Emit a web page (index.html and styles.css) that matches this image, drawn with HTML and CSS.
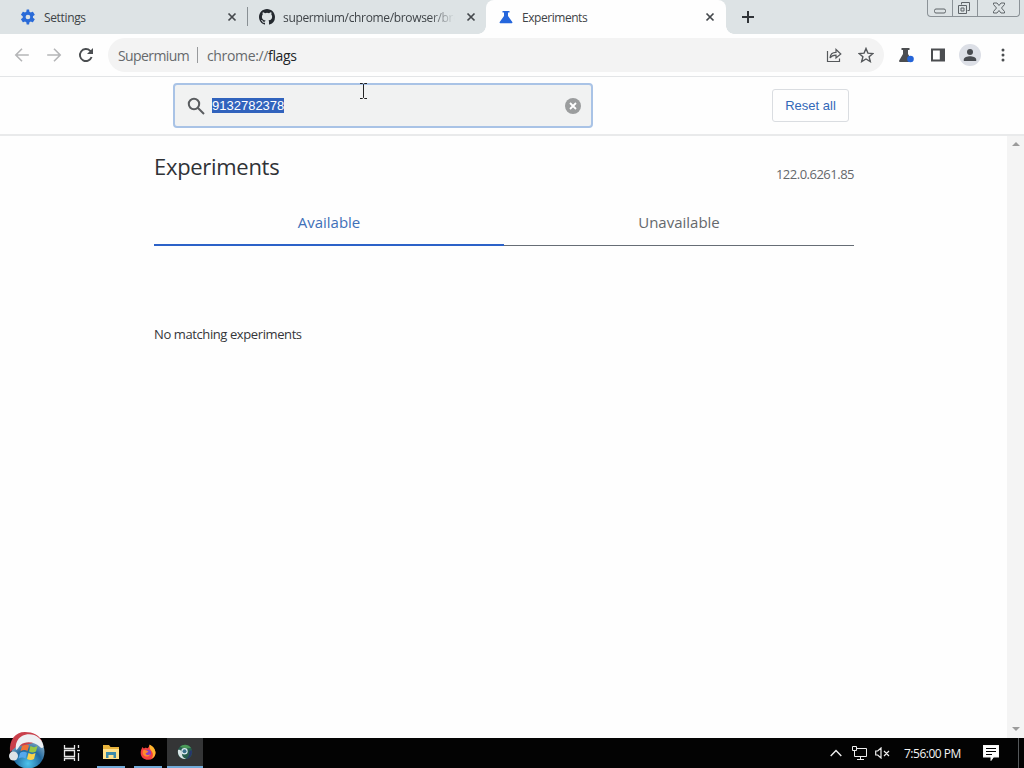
FILE: index.html
```
<!DOCTYPE html>
<html lang="en">
<head>
    <meta charset="utf-8">
    <title>Experiments</title>
    <link rel="stylesheet" href="styles.css">
</head>
<body>

<div class="desktop">
    <!-- Tab strip -->
    <div class="tab-strip">
        <div class="tab tab-settings">
            <svg class="favicon" viewBox="0 0 24 24"><path fill="#2a6bd8" d="M19.4 13c.1-.3.1-.7.1-1s0-.7-.1-1l2.500-1.900c.2-.2.300-.5.100-.7l-2.400-4c-.1-.3-.4-.4-.7-.3l-2.900 1.200c-.6-.5-1.200-.8-1.900-1.100L13.700 1.200c0-.3-.3-.5-.6-.5H10.500c-.3 0-.5.2-.6.5L9.500 4.200c-.7.3-1.300.7-1.900 1.100L4.700 4.100c-.3-.1-.6 0-.7.300l-2.400 4c-.1.200-.1.500.100.7L4.200 11c0 .3-.1.700-.1 1s0 .7.100 1l-2.500 1.900c-.2.200-.3.500-.1.7l2.400 4c.1.300.4.400.7.300l2.900-1.200c.6.500 1.200.8 1.900 1.100l.4 3c0 .3.300.5.600.5h2.600c.3 0 .5-.2.600-.5l.4-3c.7-.3 1.300-.7 1.900-1.100l2.900 1.200c.3.1.6 0 .7-.3l2.400-4c.1-.2.100-.5-.1-.7zM11.900 15.500a3.500 3.500 0 1 1 0-7 3.500 3.500 0 0 1 0 7z"/></svg>
            <span class="tab-title">Settings</span>
            <svg class="tab-close" viewBox="0 0 10 10"><path d="M1.500 1.500l7 7M8.500 1.500l-7 7"/></svg>
        </div>
        <div class="tab tab-github">
            <svg class="favicon" viewBox="0 0 16 16"><path fill="#24292f" d="M8 0C3.580 0 0 3.580 0 8c0 3.540 2.290 6.530 5.470 7.590.4.070.55-.17.55-.38 0-.19-.01-.82-.01-1.490-2.010.37-2.530-.49-2.690-.94-.09-.23-.48-.94-.82-1.130-.28-.15-.68-.52-.01-.53.63-.01 1.080.58 1.230.82.720 1.210 1.870.87 2.330.66.070-.52.280-.87.510-1.070-1.780-.2-3.640-.89-3.640-3.950 0-.87.310-1.590.82-2.150-.08-.2-.36-1.020.08-2.120 0 0 .67-.21 2.200.82a7.500 7.500 0 0 1 4 0c1.530-1.040 2.200-.82 2.200-.82.440 1.100.16 1.920.08 2.120.51.560.82 1.270.82 2.150 0 3.070-1.870 3.750-3.650 3.950.29.250.54.730.54 1.480 0 1.070-.01 1.930-.01 2.200 0 .21.150.46.550.38A8.010 8.010 0 0 0 16 8c0-4.420-3.580-8-8-8z"/></svg>
            <span class="tab-title fade">supermium/chrome/browser/bro</span>
            <svg class="tab-close" viewBox="0 0 10 10"><path d="M1.500 1.500l7 7M8.500 1.500l-7 7"/></svg>
        </div>
        <div class="tab tab-active">
            <svg class="favicon" viewBox="0 0 16 16"><path fill="#2566dc" d="M4.500 2h7v1.600H10V7l4.300 6c.4.700 0 1.200-.6 1.200H2.300c-.6 0-1-.5-.6-1.200L6 7V3.600H4.500z"/></svg>
            <span class="tab-title">Experiments</span>
            <svg class="tab-close" viewBox="0 0 10 10"><path d="M1.500 1.500l7 7M8.500 1.500l-7 7"/></svg>
        </div>
        <svg class="new-tab" viewBox="0 0 12 12"><path d="M6 0v12M0 6h12"/></svg>
        <div class="window-controls">
            <span class="win-min"><svg width="14" height="6" viewBox="0 0 14 6"><rect x="1.500" y="1" width="11" height="4" rx="1.500"/></svg></span>
            <span class="win-max"><svg width="14" height="14" viewBox="0 0 14 14"><path d="M4.500 3.500v-2h8v8h-2M1.500 4.500h8v8h-8zM4 7h3v3H4z"/></svg></span>
            <span class="win-close"><svg width="14" height="12" viewBox="0 0 14 12"><path d="M1.500 1h3.500l2 2.500L9 1h3.500v1.500L9.500 6l3 3.500V11H9L7 8.500 5 11H1.500V9.500l3-3.500-3-3.500z"/></svg></span>
        </div>
    </div>

    <!-- Toolbar -->
    <div class="toolbar">
        <div class="nav-buttons">
            <svg class="nav-icon disabled" viewBox="0 0 16 16"><path d="M14.800 8H2M8 1.800L1.800 8 8 14.200"/></svg>
            <svg class="nav-icon disabled" viewBox="0 0 16 16"><path d="M1.200 8H14M8 1.800L14.200 8 8 14.200"/></svg>
            <svg class="nav-icon" viewBox="0 0 16 16"><path d="M13.600 10a6 6 0 1 1-1.400-6.200L14 5.500"/><path class="solid" d="M15 1v6H9z"/></svg>
        </div>
        <div class="omnibox">
            <span class="site-name">Supermium</span>
            <span class="divider"></span>
            <span class="url">chrome://<b>flags</b></span>
            <svg class="omni-icon share" viewBox="0 0 16 16"><path d="M1.500 4v10.500h12V11.500M4 11c.3-4 2.500-5.600 6-5.600V2.500L14.800 7 10 11V8.200c-3 0-4.700.8-6 2.800z"/></svg>
            <svg class="omni-icon" viewBox="0 0 16 16"><path d="M8 1.500l1.900 4.600 5 .4-3.800 3.200 1.200 4.900L8 12l-4.300 2.600 1.200-4.900L1.100 6.500l5-.4z"/></svg>
        </div>
        <svg class="tool-icon" viewBox="0 0 18 18"><path fill="#4b4d50" d="M4.500 2h8v2H11v4l4 6.500c.4.800 0 1.500-.8 1.500H3c-.9 0-1.200-.8-.8-1.500L6 8V4H4.500z"/><circle cx="13.500" cy="13" r="3.300" fill="#2464d8"/></svg>
        <svg class="tool-icon" viewBox="0 0 18 18"><path fill="#4b4d50" d="M2 2.500h14v13H2zM4 4.500v9h6.800v-9z" fill-rule="evenodd"/></svg>
        <div class="avatar"><svg width="14" height="14" viewBox="0 0 14 14"><circle cx="7" cy="4" r="3"/><path d="M.8 13v-1.500C.8 9.200 4.500 8.200 7 8.200s6.200 1 6.200 3.300V13z"/></svg></div>
        <svg class="menu-icon" viewBox="0 0 4 16"><circle cx="2" cy="3" r="1.500"/><circle cx="2" cy="8" r="1.500"/><circle cx="2" cy="13" r="1.500"/></svg>
    </div>

    <!-- Search header -->
    <div class="flags-header">
        <div class="search-box">
            <svg class="search-icon" viewBox="0 0 18 18"><circle cx="7" cy="7" r="5.200"/><path d="M11 11l6 6"/></svg>
            <span class="query">9132782378</span>
            <svg class="clear-icon" viewBox="0 0 16 16"><circle cx="8" cy="8" r="8"/><path d="M5 5l6 6M11 5l-6 6"/></svg>
        </div>
        <button class="reset-btn">Reset all</button>
        <svg class="cursor" viewBox="0 0 9 16"><path d="M1 .5h2.500l1 1 1-1H8M4.500 1.500v13M1 15.500h2.500l1-1 1 1H8"/></svg>
    </div>

    <!-- Page -->
    <div class="page">
        <div class="content">
            <div class="title-row">
                <h1>Experiments</h1>
                <span class="version">122.0.6261.85</span>
            </div>
            <div class="flag-tabs">
                <div class="flag-tab selected"><span>Available</span></div>
                <div class="flag-tab"><span>Unavailable</span></div>
            </div>
            <p class="no-match"><span>No matching experiments</span></p>
        </div>
        <div class="scrollbar">
            <svg width="8" height="5" viewBox="0 0 8 5"><path d="M0 5l4-4 4 4z"/></svg>
            <svg width="8" height="5" viewBox="0 0 8 5"><path d="M0 0l4 4 4-4z"/></svg>
        </div>
    </div>

    <!-- Taskbar -->
    <div class="taskbar">
        <svg class="start" viewBox="0 0 38 36">
            <defs>
                <radialGradient id="orb" cx="50%" cy="85%" r="75%">
                    <stop offset="0" stop-color="#4fc5ee"/>
                    <stop offset=".55" stop-color="#21689d"/>
                    <stop offset="1" stop-color="#8fb2c9"/>
                </radialGradient>
            </defs>
            <circle cx="20" cy="20" r="16.500" fill="url(#orb)"/>
            <path fill="#ee7135" d="M14 14c2.500-2 4.500-2 7-.5L19.500 19c-2.500-1.500-4.500-1.300-7 .2z"/>
            <path fill="#98c744" d="M22.500 14c2.500 1.500 4.500 1.500 7 0L28 19.500c-2.500 1.500-4.500 1.300-7 0z"/>
            <path fill="#55a8ed" d="M12 21c2.500-1.500 4.500-1.500 7-.2L17.500 26.500c-2.500-1.500-4.500-1.300-7 .3z"/>
            <path fill="#fbd34a" d="M20.500 21c2.500 1.500 4.500 1.500 7 0L26 27c-2.500 1.500-4.500 1.200-7 0z"/>
            <path fill="#c9404b" d="M2 20C1 8 7 0 17 0c8 0 14 3 17 9L8 15z"/>
            <path fill="#edf0f3" d="M8 18c-1-6 1-11 6-14 5-2.500 12-2.500 17 2 3 2.500 4.500 6 4.500 9-1 1.500-3 1-4-.5C27 9.500 17 8.500 12.500 13c-2 2-2.500 4.500-4.500 5z"/>
            <circle cx="5.500" cy="24" r="4.500" fill="#dfe3e6"/>
        </svg>
        <svg class="task-view" viewBox="0 0 18 16"><path d="M1.500 0v3.500h10V0M1.500 5.500h10v6h-10zM1.500 16v-2.500h10V16M15.500 0v3M15.500 8v8"/><path d="M14 5.500h3"/></svg>
        <div class="task">
            <svg width="18" height="16" viewBox="0 0 18 16"><path fill="#e8b33b" d="M1 1h6l1.500 2H17v12H1z"/><path fill="#ffe08a" d="M1 5h16v10H1z"/><path fill="#3c8aa8" d="M4 8h10v6h-2.500v-3h-5v3H4z"/></svg>
        </div>
        <div class="task">
            <svg width="16" height="16" viewBox="0 0 16 16"><path fill="#f5413f" d="M2.500 3l1.300 1.500L6 3.500C7 5 9 4 9.500 1c3 1.500 6 4.500 6 8A7.300 7 0 0 1 8 15.800C4 15.800.7 13 .7 9c0-2.400.8-4 1.800-6z"/><path fill="#ffb52d" d="M9.500.5c3.500 1.500 6 4.700 6 8.300 0 2.500-1.500 5-4 6 1.500-2 2-4.500.5-7C10 5 9 4 9.500.5z"/><circle cx="7.700" cy="9" r="3.300" fill="#8b3fc4"/><path fill="#ff8a2c" d="M3 6.500c2-1 4 0 5.500 1.300L5.500 9.500c1 2 3.500 2 5 .5-.5 3-6.500 4-7.800-.5z"/></svg>
        </div>
        <div class="task current">
            <svg width="16" height="16" viewBox="0 0 16 16"><circle cx="8" cy="8" r="7.300" fill="#265e4e"/><path fill="#d8e4e6" d="M1 6c2-1 4 1 4 4s2 4 4 4.800C5 16 0 12 1 6z"/><path fill="#27366d" d="M14.800 6c1 5-2 8.500-6 9.200 3-2 4-5 3.500-8z"/><path fill="#4c9b59" d="M3 3c3-3 8-3 11 1l-5 .5z"/><circle cx="7.500" cy="7.300" r="3.200" fill="#dceaf0"/><circle cx="7.500" cy="7.300" r="2" fill="#38708b"/></svg>
        </div>
        <div class="tray">
            <svg class="chevron" viewBox="0 0 12 8"><path d="M.7 7L6 1.500 11.300 7"/></svg>
            <svg class="network" viewBox="0 0 17 14"><path d="M6 2.500h9.500v8h-12V6M9.500 10.500v3M6 13.500h7M1.500.5h4v4h-4zM3.500 4.500v2"/></svg>
            <svg class="volume" viewBox="0 0 15 12"><path d="M.7 4h2L6 1v10L2.700 8h-2zM9 4l5 5M14 4L9 9"/></svg>
            <span class="clock">7:56:00 PM</span>
            <svg class="notify" viewBox="0 0 16 16"><path fill="#fff" d="M0 0h16v12H10.500L8 15.500V12H0z"/><path stroke="#000" d="M3 3.500h10M3 6.500h10M3 9.500h6"/></svg>
            <span class="show-desktop"></span>
        </div>
    </div>
</div>

</body>
</html>
```
FILE: styles.css
```
/* Global Reset */
* {
    margin: 0;
    padding: 0;
    box-sizing: border-box;
}

body {
    font-family: "Open Sans", "Noto Sans", sans-serif;
    background: #fefefe;
    color: #35363a;
    overflow: hidden;
}

svg {
    display: block;
    flex: none;
}

.desktop {
    width: 1024px;
    height: 768px;
    display: flex;
    flex-direction: column;
    position: relative;
}

/* Tab strip */
.tab-strip {
    height: 34px;
    background: #dde3e5;
    display: flex;
    flex: none;
}

.tab {
    display: flex;
    align-items: center;
    height: 34px;
    font-size: 12px;
    letter-spacing: -0.35px;
    color: #3e4347;
    white-space: nowrap;
}

.tab-settings {
    width: 248px;
    padding: 0 11px 0 20px;
    background: linear-gradient(#899094, #899094) right 7px / 1px 19px no-repeat;
}

.tab-github {
    width: 238px;
    padding: 0 10px 0 11px;
    letter-spacing: -0.34px;
}

.tab-active {
    width: 240px;
    padding: 0 11px 0 12px;
    background: #fefefe;
    border-radius: 8px 8px 0 0;
    letter-spacing: -0.45px;
    position: relative;
}

/* Curved feet of the active tab */
.tab-active::before,
.tab-active::after {
    content: "";
    position: absolute;
    bottom: 0;
    width: 8px;
    height: 8px;
}

.tab-active::before {
    left: -8px;
    background: radial-gradient(circle at 0 0, #dde3e5 7.5px, #fefefe 8px);
}

.tab-active::after {
    right: -8px;
    background: radial-gradient(circle at 100% 0, #dde3e5 7.5px, #fefefe 8px);
}

.favicon {
    width: 16px;
    height: 16px;
    margin-right: 8px;
}

.tab-title {
    flex: 1;
}

.fade {
    margin-right: 6px;
    -webkit-mask-image: linear-gradient(to right, #000 83%, transparent 97%);
    mask-image: linear-gradient(to right, #000 83%, transparent 97%);
}

.tab-close {
    width: 10px;
    height: 10px;
    stroke: #44484c;
    stroke-width: 1.7;
}

.new-tab {
    width: 12px;
    height: 12px;
    margin: 11px 0 0 16px;
    stroke: #303438;
    stroke-width: 2;
}

.window-controls {
    display: flex;
    width: 93px;
    height: 17px;
    margin-left: auto;
    margin-right: 4px;
    border: 1px solid #8b9297;
    border-top: 0;
    border-radius: 0 0 4px 4px;
}

.window-controls span {
    display: flex;
    align-items: center;
    justify-content: center;
}

.window-controls svg {
    fill: none;
    stroke: #5e6468;
}

.win-min {
    width: 24px;
    padding-top: 5px;
}

.win-max {
    width: 26px;
    border-left: 1px solid #8b9297;
    border-right: 1px solid #8b9297;
}

.win-max svg {
    margin-right: 2px;
}

.win-close {
    flex: 1;
}

/* Toolbar */
.toolbar {
    height: 43px;
    flex: none;
    display: flex;
    align-items: center;
    border-bottom: 1px solid #e3e5e7;
}

.nav-buttons {
    display: flex;
    gap: 16px;
    padding-left: 14px;
}

.nav-icon {
    width: 16px;
    height: 16px;
    fill: none;
    stroke: #4b4e51;
    stroke-width: 1.9;
}

.nav-icon .solid {
    fill: #4b4e51;
    stroke: none;
}

.nav-icon.disabled {
    stroke: #b5b6b8;
    stroke-width: 1.6;
}

.omnibox {
    display: flex;
    align-items: center;
    width: 776px;
    height: 34px;
    margin-left: 14px;
    padding: 0 10px;
    border-radius: 17px;
    background: #f3f3f3;
    font-size: 14px;
    color: #66696c;
}

.site-name {
    width: 71px;
    letter-spacing: -0.6px;
}

.divider {
    width: 1px;
    height: 16px;
    margin: 0 9px 0 8px;
    background: #989a9c;
}

.url {
    letter-spacing: -0.35px;
}

.url b {
    font-weight: normal;
    color: #222427;
}

.omni-icon {
    width: 16px;
    height: 16px;
    fill: none;
    stroke: #55585b;
    stroke-width: 1.4;
}

.share {
    margin-left: auto;
    margin-right: 16px;
    stroke-width: 1.2;
}

.tool-icon {
    width: 18px;
    height: 18px;
    margin-left: 14px;
}

.omnibox + .tool-icon {
    margin-left: 13px;
}

.avatar {
    width: 22px;
    height: 22px;
    margin-left: 12px;
    border-radius: 50%;
    background: #dcdfe6;
    display: flex;
    align-items: center;
    justify-content: center;
    fill: #484b50;
}

.menu-icon {
    width: 4px;
    height: 16px;
    margin-left: 20px;
    fill: #4b4e51;
}

/* Search header */
.flags-header {
    height: 59px;
    flex: none;
    display: flex;
    align-items: flex-start;
    padding: 6px 0 0 173px;
    border-bottom: 2px solid #e9eaeb;
    position: relative;
}

.search-box {
    display: flex;
    align-items: center;
    width: 420px;
    height: 45px;
    padding: 0 10px 0 12px;
    border: 2px solid #a9c3e6;
    border-radius: 4px;
    background: #f1f2f2;
}

.search-icon {
    width: 18px;
    height: 18px;
    fill: none;
    stroke: #5a5d60;
    stroke-width: 2;
}

.query {
    margin-left: 7px;
    background: #3163bd;
    color: #fff;
    font-family: "Liberation Sans", Arial, sans-serif;
    font-size: 13px;
    line-height: 15px;
}

.clear-icon {
    width: 16px;
    height: 16px;
    margin-left: auto;
    fill: #9b9d9e;
}

.clear-icon path {
    stroke: #fff;
    stroke-width: 1.8;
}

.reset-btn {
    width: 77px;
    height: 33px;
    margin: 6px 0 0 179px;
    border: 1px solid #dadde1;
    border-radius: 3px;
    background: #fefefe;
    color: #3268b8;
    font-family: "Liberation Sans", Arial, sans-serif;
    font-size: 13px;
}

/* Mouse pointer lies over the search box */
.cursor {
    position: absolute;
    left: 359px;
    top: 6px;
    width: 9px;
    height: 16px;
    fill: none;
    stroke: #222;
}

/* Page */
.page {
    flex: 1;
    display: flex;
    justify-content: space-between;
}

.content {
    width: 700px;
    margin-left: 154px;
}

.title-row {
    display: flex;
    justify-content: space-between;
    height: 64px;
    padding-top: 14px;
}

h1 {
    font-size: 22px;
    font-weight: normal;
    line-height: 32px;
    letter-spacing: -0.3px;
    color: #303236;
}

.version {
    padding-top: 14px;
    font-size: 13px;
    line-height: 20px;
    letter-spacing: -0.5px;
    color: #65686c;
}

.flag-tabs {
    display: flex;
    height: 46px;
}

.flag-tab {
    flex: 1;
    border-bottom: 1px solid #666d75;
    color: #65686c;
    font-size: 15px;
    line-height: 45px;
    text-align: center;
}

.flag-tab.selected {
    border-bottom: 2px solid #2c62c8;
    color: #4070b8;
}

.no-match {
    margin-top: 78px;
    font-size: 13px;
    line-height: 20px;
    letter-spacing: -0.4px;
}

.scrollbar {
    width: 17px;
    padding: 5px 0 6px 5px;
    background: #f4f4f4;
    display: flex;
    flex-direction: column;
    justify-content: space-between;
    fill: #9b9b9b;
}

/* Taskbar */
.taskbar {
    height: 30px;
    flex: none;
    display: flex;
    align-items: center;
    background: #030303;
}

/* Hat sticks out above the bar */
.start {
    width: 38px;
    height: 36px;
    margin: -6px 0 0 8px;
}

.task-view {
    width: 18px;
    height: 16px;
    margin: 0 19px 0 17px;
    fill: none;
    stroke: #e8e8e8;
    stroke-width: 1.3;
}

.task {
    width: 28px;
    height: 30px;
    margin-left: -3px;
    margin-right: 12px;
    display: flex;
    align-items: center;
    justify-content: center;
    border-bottom: 2px solid #71aad8;
}

.task.current {
    width: 36px;
    margin-left: -7px;
    background: #343536;
}

.tray {
    display: flex;
    align-items: center;
    height: 30px;
    margin-left: auto;
    fill: none;
    stroke: #eee;
    color: #f4f4f4;
}

.chevron {
    width: 12px;
    height: 8px;
    stroke-width: 1.4;
}

.network {
    width: 17px;
    height: 14px;
    margin-left: 9px;
}

.volume {
    width: 15px;
    height: 12px;
    margin-left: 7px;
    stroke-width: 1.2;
}

.clock {
    width: 59px;
    margin: 0 20px 0 14px;
    font-size: 12px;
    letter-spacing: -0.5px;
    white-space: nowrap;
}

.notify {
    width: 16px;
    height: 16px;
}

.show-desktop {
    width: 6px;
    height: 30px;
    margin-left: 19px;
    border-left: 1px solid #55585a;
}
```
